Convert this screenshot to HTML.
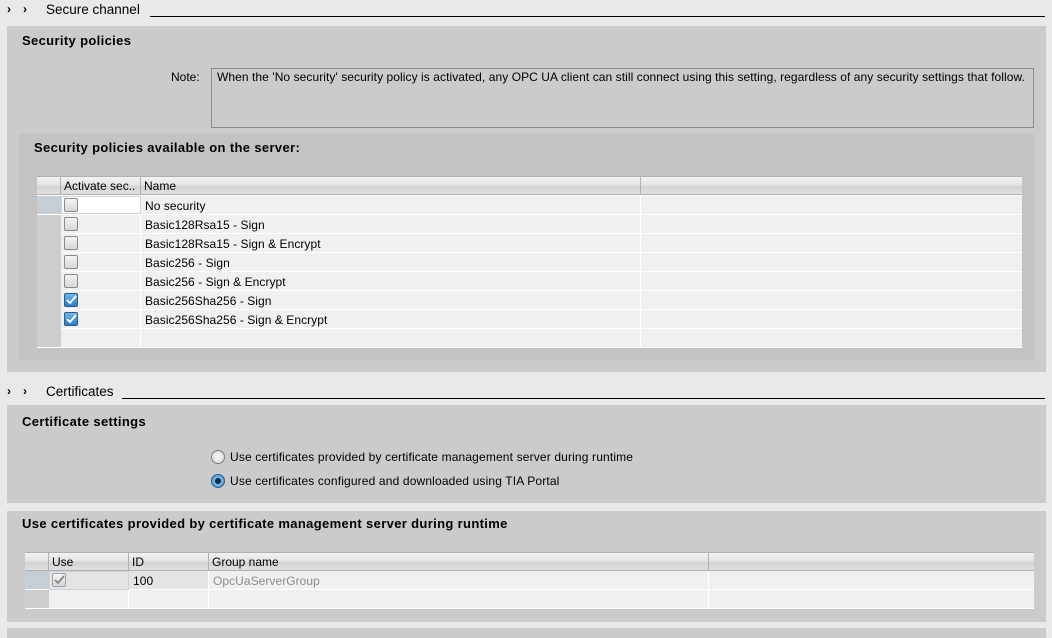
<!DOCTYPE html>
<html><head><meta charset="utf-8"><style>
*{margin:0;padding:0;box-sizing:border-box}
body{width:1052px;height:633px;background:#e9e9e9;font-family:"Liberation Sans",sans-serif;font-size:12px;color:#000;position:relative;overflow:hidden}
.a{position:absolute}
.sec{font-size:13.5px}
.chev{font-size:12px;font-weight:bold}
.line{height:1px;background:#000}
.panel{background:#cbcbcb}
.h{font-weight:bold;font-size:13px;letter-spacing:0.35px}
.hdr{background:linear-gradient(#f2f2f2,#e2e2e2 50%,#d2d2d2 55%,#e0e0e0);border-top:1px solid #b0b0b0;border-bottom:1px solid #b0b0b0;height:19px}
.hc{position:absolute;top:0;height:17px;border-right:1px solid #b0b0b0;padding:2px 0 0 3px;white-space:nowrap;overflow:hidden}
.row{position:absolute;height:18px;background:#f0f0f0}
.rh{position:absolute;background:#cdcdcd}
.cell{position:absolute;top:0;height:18px;padding:3px 0 0 4px;white-space:nowrap;letter-spacing:0.05px}
.vl{position:absolute;width:2px;background:#fff}
.cb{position:absolute;width:14px;height:14px;border:1px solid #8a8a8a;border-radius:2px;background:linear-gradient(#f4f4f4,#d6d6d6)}
.cbc{background:linear-gradient(#6fb6ea,#2a7fc8);border-color:#2c5c88}
</style></head><body>

<div class="a chev" style="left:7px;top:2px">&#8250;</div>
<div class="a chev" style="left:23px;top:2px">&#8250;</div>
<div class="a sec" style="left:46px;top:2px">Secure channel</div>
<div class="a line" style="left:150px;top:16px;width:895px"></div>

<div class="a panel" style="left:7px;top:26px;width:1039px;height:346px"></div>
<div class="a h" style="left:22px;top:33px">Security policies</div>
<div class="a" style="left:171px;top:70px">Note:</div>
<div class="a" style="left:211px;top:68px;width:823px;height:60px;border:1px solid #8c8c8c;padding:1px 5px;letter-spacing:0.07px;white-space:nowrap">When the 'No security' security policy is activated, any OPC UA client can still connect using this setting, regardless of any security settings that follow.</div>

<div class="a" style="left:19px;top:134px;width:1015px;height:226px;background:#c3c3c3"></div>
<div class="a h" style="left:34px;top:140px">Security policies available on the server:</div>

<div class="a hdr" style="left:37px;top:176px;width:985px">
 <div class="hc" style="left:0;width:24px"></div>
 <div class="hc" style="left:24px;width:80px">Activate sec..</div>
 <div class="hc" style="left:104px;width:500px">Name</div>
</div>

<div class="a" style="left:37px;top:195px;width:985px;height:153px;background:#fff"></div>
<div class="row" style="left:61px;top:196px;width:961px"></div>
<div class="row" style="left:61px;top:215px;width:961px"></div>
<div class="row" style="left:61px;top:234px;width:961px"></div>
<div class="row" style="left:61px;top:253px;width:961px"></div>
<div class="row" style="left:61px;top:272px;width:961px"></div>
<div class="row" style="left:61px;top:291px;width:961px"></div>
<div class="row" style="left:61px;top:310px;width:961px"></div>
<div class="row" style="left:61px;top:329px;width:961px"></div>
<div class="rh" style="left:37px;top:196px;width:24px;height:18px;background:#c5cdd5"></div>
<div class="rh" style="left:37px;top:215px;width:24px;height:132px"></div>
<div class="vl" style="left:140px;top:196px;height:152px;width:1px"></div>
<div class="vl" style="left:640px;top:196px;height:152px;width:1px"></div>
<div class="a" style="left:61px;top:196px;width:80px;height:18px;background:#fff;border:1px solid #c8d4e0"></div>
<div class="a" style="left:37px;top:347px;width:985px;height:1px;background:#fff"></div>

<div class="cb" style="left:64px;top:198px"></div>
<div class="cb" style="left:64px;top:217px"></div>
<div class="cb" style="left:64px;top:236px"></div>
<div class="cb" style="left:64px;top:255px"></div>
<div class="cb" style="left:64px;top:274px"></div>
<div class="cb cbc" style="left:64px;top:293px"><svg width="12" height="12" style="position:absolute;left:0;top:0"><path d="M2 6 L5 9 L11 2" stroke="#fff" stroke-width="1.8" fill="none"/></svg></div>
<div class="cb cbc" style="left:64px;top:312px"><svg width="12" height="12" style="position:absolute;left:0;top:0"><path d="M2 6 L5 9 L11 2" stroke="#fff" stroke-width="1.8" fill="none"/></svg></div>

<div class="cell" style="left:141px;top:196px">No security</div>
<div class="cell" style="left:141px;top:215px">Basic128Rsa15 - Sign</div>
<div class="cell" style="left:141px;top:234px">Basic128Rsa15 - Sign &amp; Encrypt</div>
<div class="cell" style="left:141px;top:253px">Basic256 - Sign</div>
<div class="cell" style="left:141px;top:272px">Basic256 - Sign &amp; Encrypt</div>
<div class="cell" style="left:141px;top:291px">Basic256Sha256 - Sign</div>
<div class="cell" style="left:141px;top:310px">Basic256Sha256 - Sign &amp; Encrypt</div>

<div class="a chev" style="left:7px;top:384px">&#8250;</div>
<div class="a chev" style="left:23px;top:384px">&#8250;</div>
<div class="a sec" style="left:46px;top:384px">Certificates</div>
<div class="a line" style="left:122px;top:398px;width:923px"></div>

<div class="a panel" style="left:7px;top:405px;width:1039px;height:98px"></div>
<div class="a h" style="left:22px;top:414px">Certificate settings</div>
<div class="a" style="left:211px;top:450px;width:14px;height:14px;border-radius:50%;border:1px solid #808080;background:radial-gradient(#fafafa,#d0d0d0)"></div>
<div class="a" style="left:230px;top:450px;letter-spacing:0.15px">Use certificates provided by certificate management server during runtime</div>
<div class="a" style="left:211px;top:474px;width:14px;height:14px;border-radius:50%;border:1px solid #2c5c88;background:radial-gradient(#9fd0f4,#3d8fd4)"><div style="position:absolute;left:3px;top:3px;width:6px;height:6px;border-radius:50%;background:#0b2a4a"></div></div>
<div class="a" style="left:230px;top:474px;letter-spacing:0.15px">Use certificates configured and downloaded using TIA Portal</div>

<div class="a panel" style="left:7px;top:511px;width:1039px;height:111px"></div>
<div class="a h" style="left:22px;top:516px">Use certificates provided by certificate management server during runtime</div>

<div class="a hdr" style="left:25px;top:552px;width:1009px">
 <div class="hc" style="left:0;width:24px"></div>
 <div class="hc" style="left:24px;width:80px">Use</div>
 <div class="hc" style="left:104px;width:80px">ID</div>
 <div class="hc" style="left:184px;width:500px">Group name</div>
</div>
<div class="a" style="left:25px;top:571px;width:1009px;height:38px;background:#fff"></div>
<div class="row" style="left:49px;top:571px;width:985px"></div>
<div class="row" style="left:49px;top:590px;width:985px"></div>
<div class="rh" style="left:25px;top:571px;width:24px;height:18px;background:#c5cdd5"></div>
<div class="rh" style="left:25px;top:590px;width:24px;height:18px"></div>
<div class="vl" style="left:128px;top:571px;height:37px;width:1px"></div>
<div class="vl" style="left:208px;top:571px;height:37px;width:1px"></div>
<div class="vl" style="left:708px;top:571px;height:37px;width:1px"></div>
<div class="a" style="left:49px;top:571px;width:80px;height:19px;background:#e4e4e4;border:1px solid #c8d4e0"></div>
<div class="a" style="left:129px;top:571px;width:79px;height:18px;background:#e4e4e4"></div>
<div class="cb" style="left:52px;top:573px;border-color:#a0a0a0"><svg width="12" height="12" style="position:absolute;left:0;top:0"><path d="M2 6 L5 9 L11 2" stroke="#888" stroke-width="1.8" fill="none"/></svg></div>
<div class="cell" style="left:129px;top:571px">100</div>
<div class="cell" style="left:209px;top:571px;color:#8c8c8c">OpcUaServerGroup</div>

<div class="a panel" style="left:7px;top:628px;width:1039px;height:10px"></div>
</body></html>
